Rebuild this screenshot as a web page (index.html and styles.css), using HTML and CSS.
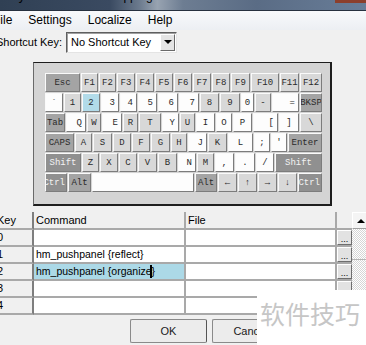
FILE: index.html
```html
<!DOCTYPE html>
<html lang="en">

<head>
    <meta charset="UTF-8">
    <title>Keyboard Shortcut Mapping</title>
    <link rel="stylesheet" href="styles.css">
</head>

<body>
    <div class="titlebar">
        <div class="title">Keyboard Shortcut Mapping</div>
        <div class="close-btn"></div>
    </div>

    <div class="menubar">
        <span>File</span>
        <span>Settings</span>
        <span>Localize</span>
        <span>Help</span>
    </div>

    <div class="shortcut-row">
        <label for="shortcut">Shortcut Key:</label>
        <div class="combo" id="shortcut">
            <span>No Shortcut Key</span>
            <span class="combo-btn"><span class="arrow-down"></span></span>
        </div>
    </div>

    <div class="kb-panel">
        <div class="kb">
            <div class="kb-row r1">
                <div class="key dark">Esc</div>
                <div class="key">F1</div>
                <div class="key">F2</div>
                <div class="key">F3</div>
                <div class="key">F4</div>
                <div class="key">F5</div>
                <div class="key">F6</div>
                <div class="key">F7</div>
                <div class="key">F8</div>
                <div class="key">F9</div>
                <div class="key">F10</div>
                <div class="key">F11</div>
                <div class="key">F12</div>
            </div>
            <div class="kb-row r2">
                <div class="key white">`</div>
                <div class="key">1</div>
                <div class="key sel">2</div>
                <div class="key white right">3</div>
                <div class="key white right">4</div>
                <div class="key white right">5</div>
                <div class="key white right">6</div>
                <div class="key white right">7</div>
                <div class="key">8</div>
                <div class="key">9</div>
                <div class="key white">0</div>
                <div class="key">-</div>
                <div class="key white right">=</div>
                <div class="key dark">BKSP</div>
            </div>
            <div class="kb-row r3">
                <div class="key dark">Tab</div>
                <div class="key white right">Q</div>
                <div class="key">W</div>
                <div class="key white right">E</div>
                <div class="key">R</div>
                <div class="key">T</div>
                <div class="key white right">Y</div>
                <div class="key">U</div>
                <div class="key white">I</div>
                <div class="key white">O</div>
                <div class="key white">P</div>
                <div class="key white right">[</div>
                <div class="key white">]</div>
                <div class="key">\</div>
            </div>
            <div class="kb-row r4">
                <div class="key dark">CAPS</div>
                <div class="key">A</div>
                <div class="key">S</div>
                <div class="key">D</div>
                <div class="key">F</div>
                <div class="key">G</div>
                <div class="key">H</div>
                <div class="key white right">J</div>
                <div class="key">K</div>
                <div class="key white">L</div>
                <div class="key white">;</div>
                <div class="key white">'</div>
                <div class="key dark">Enter</div>
            </div>
            <div class="kb-row r5">
                <div class="key darker">Shift</div>
                <div class="key">Z</div>
                <div class="key">X</div>
                <div class="key">C</div>
                <div class="key">V</div>
                <div class="key">B</div>
                <div class="key white right">N</div>
                <div class="key">M</div>
                <div class="key white">,</div>
                <div class="key white">.</div>
                <div class="key white">/</div>
                <div class="key darker">Shift</div>
            </div>
            <div class="kb-row r6">
                <div class="key darker clip">Ctrl</div>
                <div class="key dark">Alt</div>
                <div class="key white"></div>
                <div class="key dark">Alt</div>
                <div class="key">&larr;</div>
                <div class="key">&uarr;</div>
                <div class="key">&rarr;</div>
                <div class="key">&darr;</div>
                <div class="key darker clip">Ctrl</div>
            </div>
        </div>
    </div>

    <div class="grid">
        <table class="cmd-table">
            <tr>
                <th class="key-col">Key</th>
                <th class="cmd-col">Command</th>
                <th class="file-col">File</th>
                <th class="btn-col"></th>
            </tr>
            <tr>
                <td class="key-col">0</td>
                <td></td>
                <td></td>
                <td class="btn-col"><span class="dots">...</span></td>
            </tr>
            <tr>
                <td class="key-col">1</td>
                <td>hm_pushpanel {reflect}</td>
                <td></td>
                <td class="btn-col"><span class="dots">...</span></td>
            </tr>
            <tr>
                <td class="key-col">2</td>
                <td class="editing">hm_pushpanel {organize<span class="caret"></span>}</td>
                <td></td>
                <td class="btn-col"><span class="dots">...</span></td>
            </tr>
            <tr>
                <td class="key-col">3</td>
                <td></td>
                <td></td>
                <td class="btn-col"><span class="dots"></span></td>
            </tr>
            <tr>
                <td class="key-col">4</td>
                <td></td>
                <td></td>
                <td class="btn-col"><span class="dots"></span></td>
            </tr>
        </table>
        <div class="scrollbar">
            <div class="scroll-up"><span class="arrow-up"></span></div>
            <div class="scroll-thumb"></div>
        </div>
    </div>

    <div class="actions">
        <button>OK</button>
        <button>Cancel</button>
    </div>

    <div class="watermark">软件技巧</div>
</body>

</html>
```

FILE: styles.css
```css
body {
    position: relative;
    width: 366px;
    height: 345px;
    margin: 0;
    overflow: hidden;
    background-color: #f0f0f0;
    font-family: "Liberation Sans", Arial, sans-serif;
    color: #000;
}

/* window chrome */

.titlebar {
    position: relative;
    height: 10px;
    overflow: hidden;
    border-bottom: 1px solid #27313f;
    background: linear-gradient(90deg, #304054 0%, #3a4a61 30%, #6b7a8d 38%, #98a3b1 43%, #6d7d92 50%, #5a6c85 70%, #687d98 100%);
}

.title {
    margin-top: -10px;
    padding-left: 4px;
    font-size: 12px;
    line-height: 12px;
    white-space: nowrap;
}

.close-btn {
    position: absolute;
    top: 0;
    right: 0;
    width: 31px;
    height: 3px;
    background-color: #8c3f2c;
}

.menubar {
    display: flex;
    height: 19px;
    margin-left: -15px;
    background: linear-gradient(#f8f9fb, #eceff3);
    font-size: 12px;
    line-height: 19px;
}

.menubar span {
    padding: 0 8px;
}

.shortcut-row {
    display: flex;
    align-items: center;
    height: 22px;
    margin: 1px 0 0 -4px;
    font-size: 11px;
}

.shortcut-row label {
    width: 70px;
}

.combo {
    display: flex;
    align-items: center;
    justify-content: space-between;
    box-sizing: border-box;
    width: 111px;
    height: 21px;
    padding: 0 1px 0 4px;
    border: 1px solid;
    border-color: #5f5f5f #e4e4e4 #e4e4e4 #5f5f5f;
    box-shadow: inset 1px 1px 0 #a0a0a0;
    background-color: #fff;
}

.combo-btn {
    display: flex;
    align-items: center;
    justify-content: center;
    box-sizing: border-box;
    width: 15px;
    height: 17px;
    border: 1px solid;
    border-color: #fff #6a6a6a #6a6a6a #fff;
    background-color: #e4e4e4;
}

.arrow-down {
    width: 0;
    height: 0;
    border-left: 4px solid transparent;
    border-right: 4px solid transparent;
    border-top: 4px solid #000;
}

/* keyboard */

.kb-panel {
    width: 277px;
    margin: 9px 0 0 33px;
    padding: 10px 8px 12px 11px;
    border: 1px solid #1e1e1e;
    border-left-color: #6a6a6a;
    border-right-width: 2px;
    border-bottom-width: 2px;
    background-color: #d4d4d4;
}

.kb {
    display: flex;
    flex-direction: column;
    gap: 1px;
}

.kb-row {
    display: grid;
    column-gap: 1px;
    height: 19px;
}

.r1 { grid-template-columns: 35px 17px 17px 18px 18px 18px 18px 18px 18px 19px 28px 19px 22px; }
.r2 { grid-template-columns: 18px 17px 18px 18px 17px 19px 20px 20px 19px 20px 13px 16px 27px 22px; }
.r3 { grid-template-columns: 20px 20px 14px 20px 15px 22px 17px 15px 19px 16px 19px 25px 20px 22px; }
.r4 { grid-template-columns: 29px 17px 19px 18px 18px 19px 16px 19px 19px 25px 16px 16px 34px; }
.r5 { grid-template-columns: 36px 17px 18px 18px 19px 19px 18px 17px 19px 20px 18px 47px; }
.r6 { grid-template-columns: 22px 23px 102px 22px 19px 19px 19px 19px 24px; }

.key {
    display: flex;
    align-items: center;
    justify-content: center;
    box-sizing: border-box;
    overflow: hidden;
    border: 1px solid;
    border-color: #fafafa #7c7c7c #7c7c7c #fafafa;
    background-color: #d8d8d8;
    color: #2a2a2a;
    font: 9px "Liberation Mono", "DejaVu Sans Mono", monospace;
    white-space: nowrap;
}

.key.white { background-color: #fdfdfd; }
.key.dark { background-color: #a4a4a4; }
.key.darker { background-color: #909090; color: #f2f2f2; }
.key.sel { background-color: #b2dbe9; }

.key.right {
    justify-content: flex-end;
    padding-right: 3px;
}

.key.clip {
    justify-content: flex-end;
    padding-right: 1px;
}

/* command grid */

.grid {
    display: flex;
    margin: 6px 0 0 -10px;
}

.cmd-table {
    width: 362px;
    table-layout: fixed;
    border-collapse: separate;
    border-spacing: 0;
    font-size: 10.5px;
}

.cmd-table th,
.cmd-table td {
    height: 15px;
    padding: 0 0 0 2px;
    overflow: hidden;
    border-right: 2px solid #a9a9a9;
    border-bottom: 2px solid #a9a9a9;
    background-color: #fff;
    text-align: left;
    font-weight: normal;
    line-height: 15px;
    white-space: nowrap;
}

.cmd-table th {
    height: 16px;
    background-color: #f0f0f0;
    font-size: 11px;
}

.cmd-table .key-col {
    width: 35px;
    padding-left: 7px;
    border-right-color: #7e7e7e;
    background-color: #f0f0f0;
    font-size: 11px;
}

.cmd-table .cmd-col { width: 148px; }
.cmd-table .file-col { width: 147px; }

.cmd-table .btn-col {
    width: 15px;
    padding: 0;
    border-right: none;
    background-color: #f0f0f0;
}

.dots {
    display: block;
    box-sizing: border-box;
    height: 15px;
    border: 1px solid;
    border-color: #fff #6e6e6e #6e6e6e #fff;
    background-color: #e2e2e2;
    font-size: 9px;
    line-height: 16px;
    text-align: center;
}

.cmd-table td.editing {
    background-color: #acd9e7;
}

.caret {
    display: inline-block;
    width: 2px;
    height: 13px;
    margin-left: -2px;
    vertical-align: -3px;
    background-color: #000;
}

.scrollbar {
    flex-shrink: 0;
    width: 17px;
    height: 103px;
    background: repeating-conic-gradient(#ffffff 0 25%, #d6d6d6 0 50%) 0 0 / 2px 2px;
}

.scroll-up {
    display: flex;
    align-items: center;
    justify-content: center;
    box-sizing: border-box;
    height: 17px;
    border: 1px solid;
    border-color: #fff #a0a0a0 #a0a0a0 #fff;
    background-color: #f4f4f4;
}

.arrow-up {
    width: 0;
    height: 0;
    border-left: 4px solid transparent;
    border-right: 4px solid transparent;
    border-bottom: 4px solid #000;
}

.scroll-thumb {
    height: 30px;
    border-bottom: 1px solid #b4b4b4;
}

/* dialog buttons */

.actions {
    display: flex;
    gap: 5px;
    margin-top: 4px;
    padding-left: 130px;
}

.actions button {
    width: 77px;
    height: 24px;
    border: 1px solid #8a8a8a;
    border-right-color: #555;
    border-radius: 2px;
    background-color: #ececec;
    color: #1a1a1a;
    font: 11px "Liberation Sans", Arial, sans-serif;
}

/* watermark */

.watermark {
    position: absolute;
    left: 257px;
    top: 290px;
    width: 109px;
    height: 55px;
    padding: 9px 0 0 3px;
    box-sizing: border-box;
    background-color: #fff;
    color: #c6c6c6;
    font: 25px/28px "Noto Sans CJK SC", sans-serif;
    white-space: nowrap;
}
```
